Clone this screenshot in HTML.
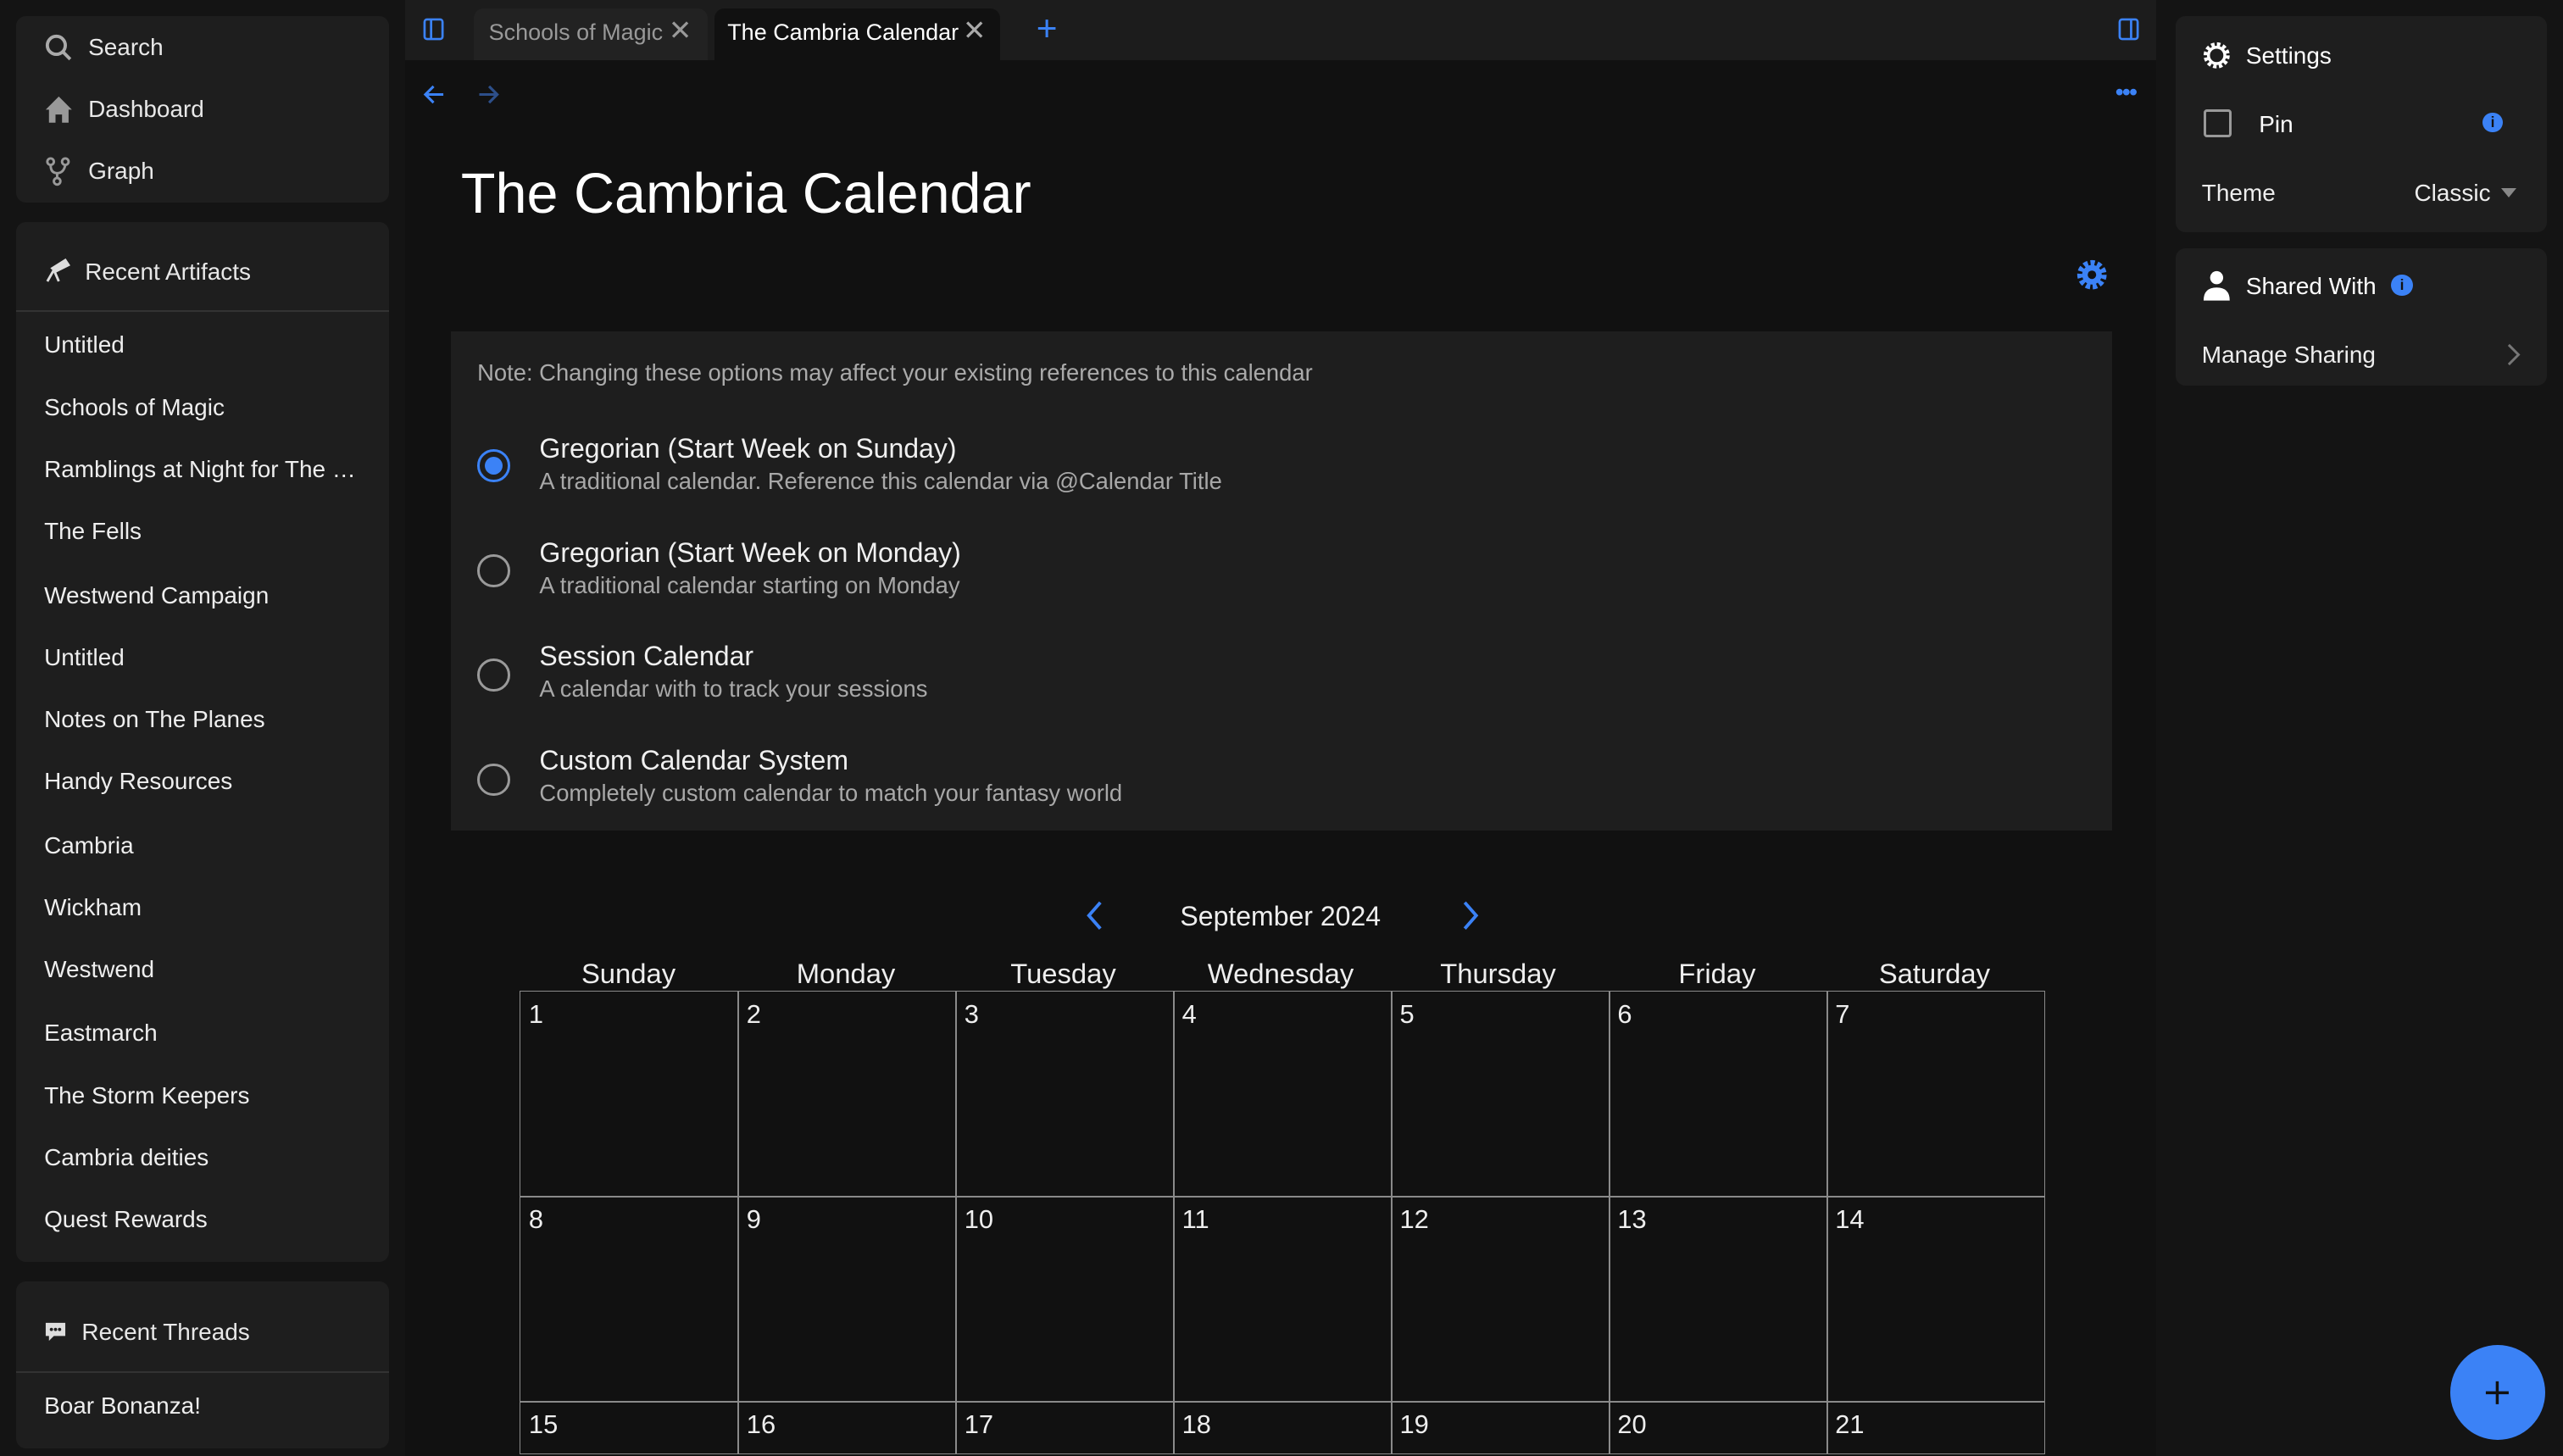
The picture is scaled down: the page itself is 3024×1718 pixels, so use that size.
<!DOCTYPE html>
<html><head><meta charset="utf-8"><style>
html{margin:0;padding:0;background:#141414;overflow:hidden;height:1718px}
body{margin:0;padding:0;background:#141414;overflow:hidden;zoom:1.928571;width:1568px;height:890.8px;position:relative;font-family:"Liberation Sans",sans-serif;color:#e8e8e8}
.abs{position:absolute}
.card{position:absolute;background:#1e1e1e;border-radius:6px}
.nav{position:absolute;left:17px;font-size:14.5px;display:flex;align-items:center;gap:9px}
.item{position:absolute;left:17px;font-size:14.5px;color:#eee}
.radio{position:absolute;left:292px;width:17px;height:17px;border:2px solid #9a9a9a;border-radius:50%}
.opt{position:absolute;left:330px}
.opt b{display:block;font-weight:normal;font-size:16.6px;color:#f0f0f0}
.opt span{display:block;font-size:14.2px;color:#a8a8a8;margin-top:2px}
.day{position:absolute;top:586px;font-size:17px;color:#eee;text-align:center;width:133px}
.cell{position:absolute;border:1px solid #8a8a8a;box-sizing:border-box;font-size:16px;padding:5px 0 0 5px;color:#eee}
</style></head><body>
<div class="card" style="left:10px;top:10px;width:228px;height:114px"></div>
<div class="nav" style="top:20px;left:27px"><svg width="18" height="18" viewBox="0 0 18 18"><circle cx="7.5" cy="7.5" r="5.5" fill="none" stroke="#aaa" stroke-width="2"/><path d="M11.5 11.5L16 16" stroke="#aaa" stroke-width="2"/></svg>Search</div>
<div class="nav" style="top:58px;left:27px"><svg width="18" height="18" viewBox="0 0 18 18"><path d="M9 1L1 9h2v8h4v-5h4v5h4V9h2z" fill="#999"/></svg>Dashboard</div>
<div class="nav" style="top:96px;left:27px"><svg width="18" height="18" viewBox="0 0 18 18"><circle cx="4" cy="3" r="2" fill="none" stroke="#999" stroke-width="1.5"/><circle cx="13" cy="3" r="2" fill="none" stroke="#999" stroke-width="1.5"/><circle cx="8" cy="15" r="2" fill="none" stroke="#999" stroke-width="1.5"/><path d="M4 5q0 5 4 5q4 0 5-5M8 10v3" fill="none" stroke="#999" stroke-width="1.5"/></svg>Graph</div>

<div class="card" style="left:10px;top:136px;width:228px;height:636px"></div>
<div class="nav" style="top:158px;left:27px"><svg width="16" height="16" viewBox="0 0 16 16"><path d="M2 14l4-7M6 7l3 7M5 6l8-5 2 3-8 4z" fill="#ddd" stroke="#ddd" stroke-width="1.5"/></svg>Recent Artifacts</div>
<div class="abs" style="left:10px;top:190px;width:228px;height:1px;background:#333"></div>
<div class="item" style="top:203px;left:27px">Untitled</div>
<div class="item" style="top:241px;left:27px">Schools of Magic</div>
<div class="item" style="top:279px;left:27px">Ramblings at Night for The …</div>
<div class="item" style="top:317px;left:27px">The Fells</div>
<div class="item" style="top:356px;left:27px">Westwend Campaign</div>
<div class="item" style="top:394px;left:27px">Untitled</div>
<div class="item" style="top:432px;left:27px">Notes on The Planes</div>
<div class="item" style="top:470px;left:27px">Handy Resources</div>
<div class="item" style="top:509px;left:27px">Cambria</div>
<div class="item" style="top:547px;left:27px">Wickham</div>
<div class="item" style="top:585px;left:27px">Westwend</div>
<div class="item" style="top:624px;left:27px">Eastmarch</div>
<div class="item" style="top:662px;left:27px">The Storm Keepers</div>
<div class="item" style="top:700px;left:27px">Cambria deities</div>
<div class="item" style="top:738px;left:27px">Quest Rewards</div>

<div class="card" style="left:10px;top:784px;width:228px;height:102px"></div>
<div class="nav" style="top:807px;left:27px"><svg width="14" height="14" viewBox="0 0 14 14"><path d="M1 1h12v8H6l-3 3V9H1z" fill="#ddd"/><circle cx="4.5" cy="5" r="1" fill="#1e1e1e"/><circle cx="7" cy="5" r="1" fill="#1e1e1e"/><circle cx="9.5" cy="5" r="1" fill="#1e1e1e"/></svg>Recent Threads</div>
<div class="abs" style="left:10px;top:839px;width:228px;height:1px;background:#333"></div>
<div class="item" style="top:852px;left:27px">Boar Bonanza!</div>

<div class="abs" style="left:248px;top:0;width:1071px;height:891px;background:#111"></div>
<div class="abs" style="left:248px;top:0;width:1071px;height:37px;background:#1c1c1c"></div>
<div class="abs" style="left:290px;top:5px;width:143px;height:32px;background:#222;border-radius:6px 6px 0 0"></div>
<div class="abs" style="left:437px;top:5px;width:175px;height:32px;background:#111;border-radius:6px 6px 0 0"></div>
<svg class="abs" style="left:259px;top:11px" width="13" height="14" viewBox="0 0 13 14"><rect x="1" y="1" width="11" height="12" rx="1.5" fill="none" stroke="#3b82f6" stroke-width="1.4"/><path d="M5 1v12" stroke="#3b82f6" stroke-width="1.4"/></svg>
<div class="abs" style="left:299px;top:12px;font-size:14px;color:#999">Schools of Magic</div>
<div class="abs" style="left:409px;top:9px;font-size:17px;color:#999">✕</div>
<div class="abs" style="left:445px;top:12px;font-size:14px;color:#fff">The Cambria Calendar</div>
<div class="abs" style="left:589px;top:9px;font-size:17px;color:#aaa">✕</div>
<div class="abs" style="left:634px;top:5px;font-size:22px;color:#3b82f6">+</div>
<svg class="abs" style="left:1296px;top:11px" width="13" height="14" viewBox="0 0 13 14"><rect x="1" y="1" width="11" height="12" rx="1.5" fill="none" stroke="#3b82f6" stroke-width="1.4"/><path d="M8 1v12" stroke="#3b82f6" stroke-width="1.4"/></svg>
<svg class="abs" style="left:258px;top:51px" width="50" height="14" viewBox="0 0 50 14"><path d="M13 7H2M7 2L2 7l5 5" fill="none" stroke="#3b82f6" stroke-width="1.6"/><path d="M35 7h11M41 2l5 5-5 5" fill="none" stroke="#2d4f8a" stroke-width="1.6"/></svg>
<div class="abs" style="left:1294px;top:48px;font-size:15px;color:#3b82f6;letter-spacing:-1px">•••</div>
<div class="abs" style="left:282px;top:99px;font-size:34.5px;color:#fff">The Cambria Calendar</div>
<svg class="abs" style="left:1269px;top:157px" width="22" height="22" viewBox="0 0 22 22"><circle cx="11" cy="11" r="7" fill="none" stroke="#3b82f6" stroke-width="4" stroke-dasharray="2.5 1.5"/><circle cx="11" cy="11" r="6" fill="#3b82f6"/><circle cx="11" cy="11" r="2.6" fill="#111"/></svg>

<div class="abs" style="left:276px;top:203px;width:1016px;height:305px;background:#1e1e1e"></div>
<div class="abs" style="left:292px;top:220px;font-size:14.2px;color:#aaa">Note: Changing these options may affect your existing references to this calendar</div>
<div class="radio" style="top:275px;border-color:#3b82f6"><div style="position:absolute;left:3px;top:3px;width:11px;height:11px;border-radius:50%;background:#3b82f6"></div></div>
<div class="opt" style="top:265px"><b>Gregorian (Start Week on Sunday)</b><span>A traditional calendar. Reference this calendar via @Calendar Title</span></div>
<div class="radio" style="top:339px"></div>
<div class="opt" style="top:329px"><b>Gregorian (Start Week on Monday)</b><span>A traditional calendar starting on Monday</span></div>
<div class="radio" style="top:403px"></div>
<div class="opt" style="top:392px"><b>Session Calendar</b><span>A calendar with to track your sessions</span></div>
<div class="radio" style="top:467px"></div>
<div class="opt" style="top:456px"><b>Custom Calendar System</b><span>Completely custom calendar to match your fantasy world</span></div>

<svg class="abs" style="left:662px;top:550px" width="250" height="20" viewBox="0 0 250 20"><path d="M11 2l-7 8 7 8" fill="none" stroke="#3b82f6" stroke-width="2"/><path d="M234 2l7 8-7 8" fill="none" stroke="#3b82f6" stroke-width="2"/></svg>
<div class="abs" style="left:722px;top:551px;font-size:16.6px;color:#eee">September 2024</div>

<div class="day" style="left:318px">Sunday</div><div class="day" style="left:451px">Monday</div><div class="day" style="left:584px">Tuesday</div><div class="day" style="left:717px">Wednesday</div><div class="day" style="left:850px">Thursday</div><div class="day" style="left:984px">Friday</div><div class="day" style="left:1117px">Saturday</div>
<div id="grid"></div>
<script>
var g=document.getElementById('grid'),h='';
for(var r=0;r<3;r++)for(var c=0;c<7;c++){var x=318+c*133.2,y=606+r*125.5;
var hh=r==2?(890-y):126.5;
h+='<div class="cell" style="left:'+x+'px;top:'+y+'px;width:134.2px;height:'+hh+'px">'+(r*7+c+1)+'</div>';}
g.innerHTML=h;
</script>

<div class="card" style="left:1331px;top:10px;width:227px;height:132px"></div>
<svg class="abs" style="left:1347px;top:25px" width="18" height="18" viewBox="0 0 18 18"><circle cx="9" cy="9" r="6.5" fill="none" stroke="#fff" stroke-width="3" stroke-dasharray="2 1.4"/><circle cx="9" cy="9" r="5" fill="none" stroke="#fff" stroke-width="1.8"/></svg>
<div class="abs" style="left:1374px;top:26px;font-size:14.5px;color:#fff">Settings</div>
<div class="abs" style="left:1348px;top:67px;width:14px;height:14px;border:2px solid #999;border-radius:2px"></div>
<div class="abs" style="left:1382px;top:68px;font-size:14.5px;color:#fff">Pin</div>
<div class="abs" style="left:1519px;top:69px;width:12px;height:12px;border-radius:50%;background:#3b82f6;font-size:9px;color:#111;text-align:center;line-height:12px;font-weight:bold">i</div>
<div class="abs" style="left:1347px;top:110px;font-size:14.5px;color:#eee">Theme</div>
<div class="abs" style="left:1477px;top:110px;font-size:14.5px;color:#eee">Classic</div>
<div class="abs" style="left:1530px;top:115px;width:0;height:0;border-left:5px solid transparent;border-right:5px solid transparent;border-top:6px solid #888"></div>

<div class="card" style="left:1331px;top:152px;width:227px;height:84px"></div>
<svg class="abs" style="left:1347px;top:165px" width="18" height="19" viewBox="0 0 18 19"><circle cx="9" cy="5" r="4" fill="#fff"/><path d="M1 19q0-8 8-8t8 8z" fill="#fff"/></svg>
<div class="abs" style="left:1374px;top:167px;font-size:14.5px;color:#fff">Shared With</div>
<div class="abs" style="left:1463px;top:168px;width:13px;height:13px;border-radius:50%;background:#3b82f6;font-size:9px;color:#111;text-align:center;line-height:13px;font-weight:bold">i</div>
<div class="abs" style="left:1347px;top:209px;font-size:14.5px;color:#eee">Manage Sharing</div>
<svg class="abs" style="left:1534px;top:210px" width="8" height="14" viewBox="0 0 8 14"><path d="M1 1l6 6-6 6" fill="none" stroke="#777" stroke-width="1.5"/></svg>

<div class="abs" style="left:1499px;top:823px;width:58px;height:58px;border-radius:50%;background:#3b82f6"></div>
<svg class="abs" style="left:1520px;top:844px" width="16" height="16" viewBox="0 0 16 16"><path d="M8 1v14M1 8h14" stroke="#111" stroke-width="1.8"/></svg>
</body></html>
